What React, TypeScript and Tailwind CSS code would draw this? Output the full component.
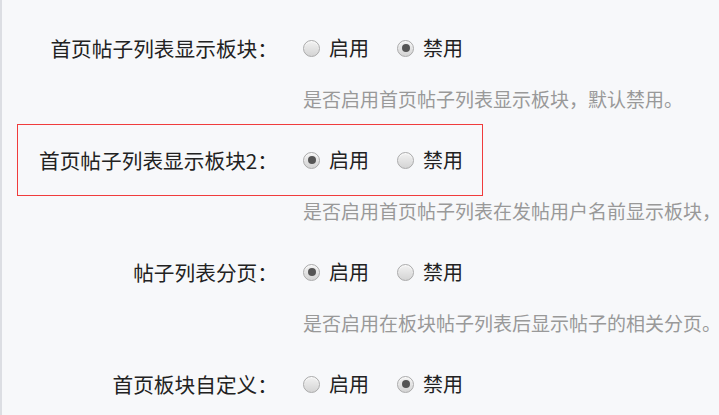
const rows = [
  {
    label: "首页帖子列表显示板块：",
    value: "off",
    desc: "是否启用首页帖子列表显示板块，默认禁用。",
    active: false,
  },
  {
    label: "首页帖子列表显示板块2：",
    value: "on",
    desc: "是否启用首页帖子列表在发帖用户名前显示板块，默认禁用。",
    active: true,
  },
  {
    label: "帖子列表分页：",
    value: "on",
    desc: "是否启用在板块帖子列表后显示帖子的相关分页。",
    active: false,
  },
  {
    label: "首页板块自定义：",
    value: "off",
    desc: "是否启用首页板块自定义，默认禁用。",
    active: false,
  },
];

const Radio = ({ checked, text }: { checked: boolean; text: string }) => (
  <label className="flex items-center gap-[9px] cursor-pointer">
    <span className="w-[17px] h-[17px] rounded-full border border-[#aaaaaa] bg-gradient-to-b from-[#f2f2f2] to-[#d4d4d4] flex items-center justify-center shadow-[inset_0_1px_1px_rgba(255,255,255,0.8)]">
      {checked && <span className="w-[8px] h-[8px] rounded-full bg-[#555]" />}
    </span>
    <span className="text-[20px] leading-none text-[#222]">{text}</span>
  </label>
);

export default function App() {
  return (
    <div className="w-[719px] h-[415px] overflow-hidden bg-[#f7f8fa] border-l-2 border-[#dcdee3] pt-[12px] pl-[15px] font-['Noto_Sans_CJK_SC','Microsoft_YaHei',sans-serif]">
      {rows.map((row) => (
        <div key={row.label}>
          <div
            className={`w-[466px] h-[72px] flex items-center border ${
              row.active ? "border-[#f03c3c]" : "border-transparent"
            }`}
          >
            <div className="w-[260px] text-right text-[20.7px] leading-none text-[#222] whitespace-nowrap">
              {row.label}
            </div>
            <div className="ml-[25px] flex items-center gap-[28px]">
              <Radio checked={row.value === "on"} text="启用" />
              <Radio checked={row.value === "off"} text="禁用" />
            </div>
          </div>
          <div className="h-[40px] pl-[286px] text-[19px] leading-[30px] text-[#999] whitespace-nowrap">
            {row.desc}
          </div>
        </div>
      ))}
    </div>
  );
}
